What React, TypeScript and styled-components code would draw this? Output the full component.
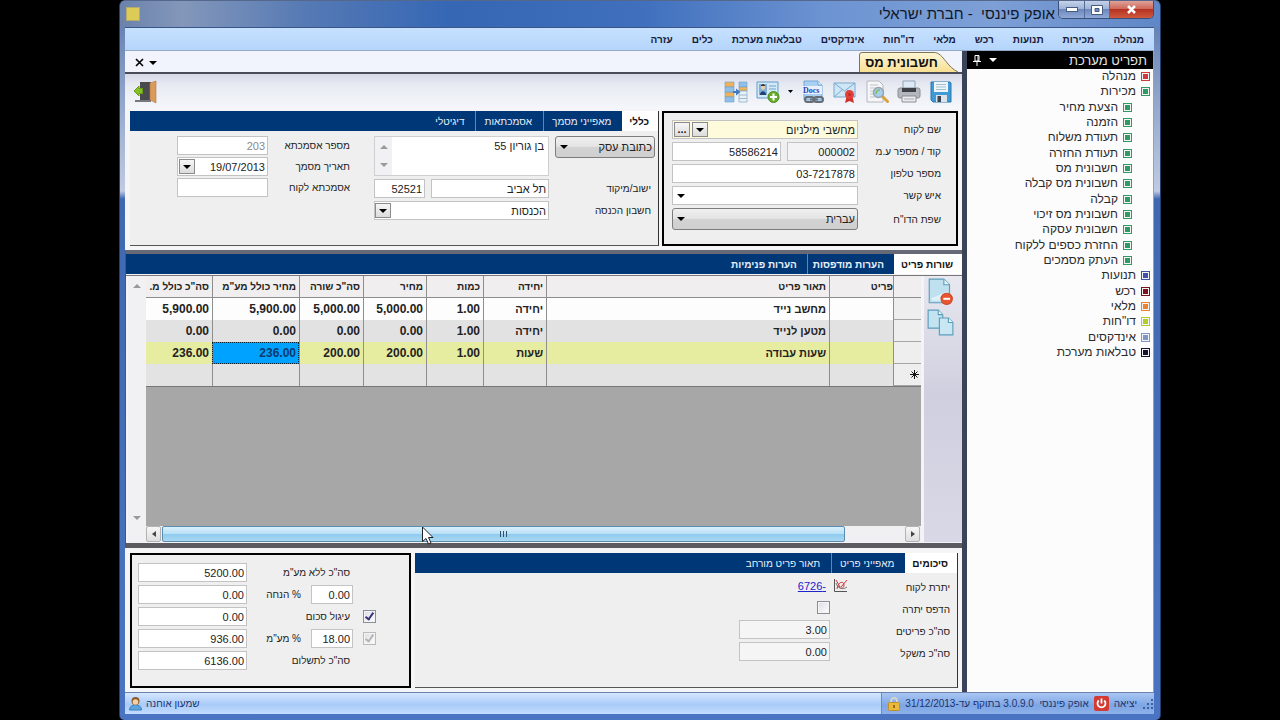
import React from "react";
import styled, { createGlobalStyle, css } from "styled-components";

const GlobalStyle = createGlobalStyle`
  *, *::before, *::after { box-sizing: border-box; }
  body { margin: 0; background: #000; }
  body, button, input, select, textarea {
    font-family: "Liberation Sans", Arial, sans-serif;
    font-size: 11px;
    color: #222;
  }
  button { cursor: default; padding: 0; }
  svg { flex: none; }
`;

/* ---------- window frame ---------- */

const Desktop = styled.div`
  direction: rtl;
  min-height: 100vh;
  padding: 0 119px;
  background: #000;
  display: flex;
`;

const Window = styled.div`
  flex: 1;
  min-width: 0;
  display: flex;
  flex-direction: column;
  padding: 0 6px 6px 5px;
  border: 1px solid #24406f;
  border-top-color: #55678a;
  border-bottom: 0;
  border-radius: 6px 6px 5px 5px;
  background: linear-gradient(to bottom, #5676ae 0, #8ea2c8 90px, #c0cbe2 190px, #4068b2 198px, #4a74c2 100%);
`;

const TitleBar = styled.header`
  height: 26px;
  margin: 0 -6px 0 -5px;
  padding: 0 6px;
  display: flex;
  align-items: flex-start;
  border-radius: 5px 5px 0 0;
  background: linear-gradient(to left, #5f86c6 0, #7d9fd6 16%, #6d94d2 32%, #3f6fbd 50%, #3567b5 68%, #5579b4 82%, #8397ba 94%, #6b82ac 100%);
`;

const WindowButtons = styled.div`
  display: flex;
  direction: ltr;
  height: 18px;
  border: 1px solid #3c4f78;
  border-top: 0;
  border-radius: 0 0 5px 5px;
  overflow: hidden;
`;

const WindowButton = styled.button<{ $close?: boolean }>`
  width: ${(p) => (p.$close ? 44 : 25)}px;
  border: 0;
  border-left: 1px solid #566b95;
  background: ${(p) =>
    p.$close
      ? "linear-gradient(#e0a199, #cf6a5c 45%, #b53323 50%, #cf5a3c)"
      : "linear-gradient(#c5d3ea, #9fb3d8 45%, #6d88bd 50%, #8fa9d8)"};
  display: flex;
  align-items: center;
  justify-content: center;
  &:first-child { border-left: 0; }
`;

const WindowTitle = styled.h1`
  flex: 1;
  margin: 0;
  padding-right: 3px;
  font-size: 15px;
  font-weight: 400;
  line-height: 25px;
  white-space: pre;
  color: #101828;
`;

const AppIcon = styled.span`
  width: 14px;
  height: 14px;
  margin-top: 6px;
  border: 1px solid #b5ac6c;
  background: #dccb57;
`;

const MenuBar = styled.nav`
  height: 24px;
  padding: 0 10px;
  display: flex;
  align-items: center;
  gap: 19px;
  border-top: 1px solid #3a5588;
  border-bottom: 1px solid #93a9c8;
  background: linear-gradient(#c6e1ff, #b6d5fb);
`;

const MenuItem = styled.button`
  border: 0;
  background: none;
  font-size: 10px;
  font-weight: 700;
  color: #16203c;
  white-space: nowrap;
`;

const Body = styled.div`
  flex: 1;
  display: flex;
  min-height: 0;
`;

/* ---------- system menu ---------- */

const Sidebar = styled.aside`
  width: 192px;
  flex: none;
  border-right: 1px solid #8fa0c0;
  border-left: 5px solid #3b4359;
  background: #fcfcfd;
`;

const SidebarHead = styled.div`
  height: 18px;
  padding: 0 6px;
  display: flex;
  align-items: center;
  gap: 8px;
  background: #000;
`;

const SidebarTitle = styled.h2`
  flex: 1;
  margin: 0;
  font-size: 13px;
  font-weight: 400;
  color: #e6e6e6;
`;

const PlainButton = styled.button`
  border: 0;
  background: none;
  display: flex;
  align-items: center;
  justify-content: center;
`;

const Tree = styled.ul`
  list-style: none;
  margin: 0;
  padding: 0 3px 0 0;
  height: 291px;
  display: grid;
  grid-auto-rows: 1fr;
`;

const TreeItem = styled.li<{ $child?: boolean }>`
  display: flex;
  align-items: center;
  gap: 5px;
  padding-right: ${(p) => (p.$child ? 18 : 0)}px;
  font-size: 12px;
  line-height: 15px;
  color: #2b2b2b;
  white-space: nowrap;
`;

const Bullet = styled.span<{ $color: string }>`
  width: 9px;
  height: 9px;
  border: 1px solid ${(p) => p.$color};
  background: ${(p) => p.$color};
  box-shadow: inset 0 0 0 1px #f4f4f4;
`;

/* ---------- document area ---------- */

const Main = styled.main`
  flex: 1;
  min-width: 0;
  display: flex;
  flex-direction: column;
  background: #f4f5fa;
`;

const DocTabs = styled.div`
  height: 23px;
  padding: 2px 4px 0 10px;
  display: flex;
  align-items: flex-end;
  justify-content: space-between;
  border-bottom: 2px solid #4a4d57;
  background: #f1f4fc;
`;

const DocTab = styled.button`
  position: relative;
  width: 99px;
  height: 20px;
  border: 0;
  background: none;
  font-size: 13px;
  font-weight: 700;
  color: #111;
  padding-right: 14px;
  svg { position: absolute; inset: 0; }
  span { position: relative; }
`;

const DocTabTools = styled.div`
  height: 100%;
  display: flex;
  align-items: center;
  gap: 5px;
`;

const Toolbar = styled.div`
  height: 35px;
  padding: 0 9px;
  display: flex;
  align-items: center;
  gap: 8px;
  background: linear-gradient(#d6d9e6, #e9ebf4 35%, #f6f7fb);
`;

const Spacer = styled.span`
  flex: 1;
`;

const PanelRow = styled.div`
  padding: 2px 4px 4px 5px;
  display: flex;
  gap: 3px;
  height: 141px;
  background: #f5f5f7;
`;

const OutlinedPanel = styled.section<{ $width: number }>`
  width: ${(p) => p.$width}px;
  flex: none;
  border: 2px solid #000;
  background: #efefef;
`;

const TabbedPanel = styled.section`
  flex: 1;
  min-width: 0;
  border-right: 1px solid #333;
  border-bottom: 1px solid #555;
  background: #efefef;
`;

const TabBar = styled.div`
  height: 20px;
  display: flex;
  background: #003776;
`;

const Tab = styled.button<{ $active?: boolean; $bold?: boolean; $last?: boolean }>`
  border: 0;
  padding: ${(p) => (p.$bold ? "0 10px 0 5px" : "0 11px 0 8px")};
  white-space: nowrap;
  background: none;
  color: #e8f0fb;
  font-size: 10px;
  font-weight: ${(p) => (p.$bold ? 700 : 400)};
  ${(p) =>
    !p.$active && !p.$last &&
    css`border-left: 1px solid #5f86b8;`}
  ${(p) =>
    p.$active &&
    css`
      padding: 0 9px 0 7px;
      background: #fff;
      color: #111;
      font-weight: 700;
    `}
`;

const fieldBox = css`
  height: 19px;
  min-width: 0;
  width: 100%;
  border: 1px solid #c3c3c3;
  border-radius: 0;
  background: #fff;
  outline: 0;
  padding: 0 2px;
`;

const Field = styled.input<{ $muted?: boolean; $tint?: string }>`
  ${fieldBox}
  direction: ${(p) => (p.dir ? p.dir : "rtl")};
  text-align: right;
  color: ${(p) => (p.$muted ? "#8a8a8a" : "#222")};
  background: ${(p) => p.$tint || "#fff"};
`;

const FieldGroup = styled.div<{ $tint?: string }>`
  ${fieldBox}
  display: flex;
  align-items: center;
  gap: 2px;
  padding: 0 0 0 1px;
  background: ${(p) => p.$tint || "#fff"};
  input { border: 0; height: 17px; background: none; flex: 1; }
`;

const SmallButton = styled.button`
  flex: none;
  width: 16px;
  height: 15px;
  border: 1px solid #8b8b8b;
  background: linear-gradient(#f6f6f6, #dcdcdc);
  display: flex;
  align-items: center;
  justify-content: center;
  font-weight: 700;
  line-height: 9px;
`;

const SelectBox = styled.div<{ $look: "flat" | "button" | "boxed" }>`
  position: relative;
  align-self: start;
  select {
    ${fieldBox}
    appearance: none;
    display: block;
    padding: 0 2px 0 18px;
    ${(p) =>
      p.$look === "button" &&
      css`
        height: 22px;
        border: 1px solid #7d7d7d;
        border-radius: 3px;
        background: linear-gradient(#f1f1f1, #e3e3e3 48%, #d3d3d3 52%, #cfcfcf);
      `}
  }
`;

const SelectArrow = styled.span<{ $boxed?: boolean }>`
  position: absolute;
  inset: 2px auto 2px 1px;
  width: 16px;
  display: flex;
  align-items: center;
  justify-content: center;
  pointer-events: none;
  ${(p) =>
    p.$boxed &&
    css`
      border: 1px solid #8b8b8b;
      background: linear-gradient(#f6f6f6, #dcdcdc);
    `}
`;

const Label = styled.label`
  white-space: nowrap;
  font-size: 10px;
  color: #222;
  align-self: center;
`;

const CustomerForm = styled.div`
  padding: 7px 15px 0 8px;
  display: grid;
  grid-template-columns: 1fr 186px;
  row-gap: 3px;
`;

const Pair = styled.div<{ $second: number }>`
  display: grid;
  grid-template-columns: 1fr ${(p) => p.$second}px;
  gap: 6px;
`;

const GeneralForm = styled.div`
  padding: 5px 3px 0;
  display: flex;
  gap: 24px;
  align-items: flex-start;
`;

const AddressForm = styled.div`
  display: grid;
  grid-template-columns: 100px 175px;
  column-gap: 6px;
  row-gap: 3px;
  label { padding-right: 4px; }
`;

const ReferenceForm = styled.div`
  display: grid;
  grid-template-columns: 62px 91px;
  column-gap: 20px;
  row-gap: 2px;
`;

const AddressBox = styled.div`
  height: 40px;
  border: 1px solid #cfcfcf;
  background: #fff;
  display: flex;
  textarea {
    flex: 1;
    min-width: 0;
    border: 0;
    outline: 0;
    resize: none;
    overflow: hidden;
    padding: 3px 4px 0;
    background: none;
  }
`;

const ScrollTrack = styled.div<{ $width: number; $bottom: number }>`
  width: ${(p) => p.$width}px;
  flex: none;
  padding: 7px 0 ${(p) => p.$bottom}px;
  display: flex;
  flex-direction: column;
  align-items: center;
  justify-content: space-between;
  background: #f1f1f3;
`;

/* ---------- item lines ---------- */

const ItemsSection = styled.section`
  flex: 1;
  display: flex;
  flex-direction: column;
  border-top: 4px solid #666a76;
  border-bottom: 5px solid #5c5c60;
  border-left: 1px solid #555;
  background: #f4f4f6;
`;

const ItemsBody = styled.div`
  flex: 1;
  display: flex;
  margin-top: 1px;
  padding: 0 0 1px 2px;
  border-top: 1px solid #777;
`;

const SideStrip = styled.div`
  width: 38px;
  flex: none;
  padding: 2px 5px 0 0;
  display: flex;
  flex-direction: column;
  align-items: center;
  gap: 4px;
  background: linear-gradient(#e8e8f0, #cfcfdf 45%, #d8d8e6);
`;

const GridColumn = styled.div`
  flex: 1;
  min-width: 0;
  margin-right: 3px;
  display: flex;
  flex-direction: column;
  background: #a7a7a7;
`;

const LinesTable = styled.table`
  width: 100%;
  table-layout: fixed;
  border-collapse: separate;
  border-spacing: 0;
  font-size: 12px;
  font-weight: 700;
  border-bottom: 1px solid #777;
`;

const HeadCell = styled.th`
  height: 22px;
  padding: 0 3px;
  overflow: hidden;
  white-space: nowrap;
  text-align: right;
  font-size: 10px;
  background: #f0eeef;
  border-bottom: 1px solid #8e8e8e;
  border-left: 1px solid #8e8e8e;
  &:nth-child(2) { padding: 0; }
  &:last-child { border-left: 0; }
`;

type RowTone = "white" | "gray" | "lime" | "new";
const tones: Record<RowTone, string> = { white: "#fdfdfd", gray: "#e2e2e3", lime: "#e6eca0", new: "#e3e3e3" };

const LineRow = styled.tr<{ $tone: RowTone }>`
  background: ${(p) => tones[p.$tone]};
`;

const Cell = styled.td<{ $selected?: boolean }>`
  height: 22px;
  padding: 0 3px;
  border-left: 1px solid #8e8e8e;
  white-space: nowrap;
  ${(p) =>
    p.$selected &&
    css`
      background: #00a2ff;
      outline: 1px dotted #123;
      outline-offset: -1px;
      color: #0b3a6e;
    `}
  &:last-child { border-left: 0; }
`;

const TextCell = styled(Cell)`
  font-size: 11px;
`;

const RowHead = styled.th`
  height: 22px;
  padding: 0 2px;
  text-align: right;
  background: #efeeef;
  border-left: 1px solid #8e8e8e;
  border-bottom: 1px solid #a5a5a5;
  svg { display: block; }
`;

const HScroll = styled.div`
  position: relative;
  direction: ltr;
  height: 16px;
  margin-top: auto;
  padding-right: 1px;
  display: flex;
  gap: 1px;
  background: #f0f0f2;
`;

const ScrollButton = styled.button`
  width: 15px;
  border: 1px solid #b3b3b3;
  border-radius: 2px;
  background: linear-gradient(#f7f7f7, #dedede);
  display: flex;
  align-items: center;
  justify-content: center;
`;

const ScrollRail = styled.div`
  flex: 1;
  display: flex;
`;

const Thumb = styled.div`
  width: 92%;
  border: 1px solid #5a8db0;
  border-radius: 2px;
  background: linear-gradient(#d9f0fc, #b9e0f6 48%, #8fcbee 52%, #a9d8f2);
  display: flex;
  align-items: center;
  justify-content: center;
  gap: 2px;
  i { width: 1px; height: 6px; background: #33506a; }
`;

const Pointer = styled.svg`
  position: absolute;
  left: 276px;
  top: 0;
`;

/* ---------- totals ---------- */

const BottomRow = styled.div`
  padding: 5px 4px 4px 5px;
  display: flex;
  gap: 4px;
  height: 144px;
  background: #f5f5f7;
`;

const SummaryForm = styled.div`
  padding: 3px 7px 0;
  display: grid;
  grid-template-columns: 120px 91px;
  grid-auto-rows: 19px;
  row-gap: 3px;
`;

const SummaryLabel = styled(Label)`
  padding-top: 4px;
`;

const BalanceCell = styled.div`
  display: flex;
  align-items: center;
  gap: 7px;
  margin-right: -18px;
  a { font-size: 11px; color: #2222cc; }
`;

const Check = styled.input`
  appearance: none;
  width: 13px;
  height: 13px;
  margin: 0;
  align-self: center;
  border: 1px solid #8d8d9a;
  background: linear-gradient(135deg, #dcdce4, #fff);
  box-shadow: inset 0 0 0 1px #f4f4f4;
  display: grid;
  place-items: center;
  &:checked::before {
    content: "";
    width: 5px;
    height: 9px;
    margin-bottom: 2px;
    border: solid #35357c;
    border-width: 0 2px 2px 0;
    transform: rotate(35deg);
  }
  &:disabled { border-color: #bbb; }
  &:disabled::before { border-color: #b5b5b5; }
`;

const TotalsForm = styled.div`
  padding: 8px 33px 0 6px;
  display: grid;
  grid-template-columns: 13px 42px 44px 1fr;
  grid-auto-rows: 19px;
  column-gap: 10px;
  row-gap: 3px;
`;

const WideLabel = styled(Label)`
  grid-column: 2 / span 2;
  padding-right: 3px;
`;

/* ---------- status bar ---------- */

const StatusBar = styled.footer`
  height: 22px;
  display: flex;
  border-top: 1px solid #6b83ad;
  font-size: 10px;
  color: #1c3370;
`;

const StatusInfo = styled.div`
  width: 273px;
  flex: none;
  display: flex;
  align-items: center;
  gap: 5px;
  background: linear-gradient(#a9c6f3, #7ea6e4 60%, #8db1ea);
  border-left: 1px solid #6b8bc4;
  white-space: pre;
`;

const ExitButton = styled(PlainButton)`
  gap: 5px;
  font-size: 10px;
  color: #1c3370;
`;

const StatusUser = styled.div`
  flex: 1;
  display: flex;
  align-items: center;
  justify-content: flex-end;
  gap: 4px;
  padding-left: 4px;
  background: linear-gradient(#d6e7ff, #a9cbf8 55%, #c3dcff);
`;

/* ---------- drawings ---------- */

type ArrowProps = { color?: string; dir?: "down" | "up" | "left" | "right" };
const arrowPaths = { down: "M0 1h8L4 5z", up: "M0 5h8L4 1z", left: "M6 0v6L2 3z", right: "M2 0v6l4-3z" };
const Arrow = ({ color = "#000", dir = "down" }: ArrowProps) => (
  <svg width="8" height="6" viewBox="0 0 8 6" aria-hidden="true">
    <path d={arrowPaths[dir]} fill={color} />
  </svg>
);

const Icon = ({ children, size = 24 }: { children: React.ReactNode; size?: number }) => (
  <svg width={size} height={size} viewBox="0 0 24 24" aria-hidden="true">
    {children}
  </svg>
);

const SaveIcon = () => (
  <Icon>
    <path d="M2 2h19l1 1v19H4l-2-2z" fill="#3f9bd6" stroke="#2a77b0" />
    <path d="M5 2h14v10H5z" fill="#eef6fb" />
    <path d="M7 4.500h10M7 7h10M7 9.500h10" stroke="#a3bfce" />
    <path d="M7 15h11v7H7z" fill="#dde3e8" />
    <path d="M8.500 16h3.500v6H8.500z" fill="#3a4653" />
  </Icon>
);
const PrintIcon = () => (
  <Icon>
    <path d="M6 1h12v9H6z" fill="#dbeaf6" stroke="#8fa4b5" />
    <rect x="1" y="8" width="22" height="10" rx="2" fill="#b4b7bc" stroke="#8a8e95" />
    <path d="M5 8h14v4H5z" fill="#3d4249" />
    <path d="M5 16h14v6H5z" fill="#e8eaec" stroke="#8b8f95" />
    <path d="M7 19h10" stroke="#a9adb3" />
  </Icon>
);
const PreviewIcon = () => (
  <Icon>
    <path d="M2 1h12l4 4v17H2z" fill="#f5f6f7" stroke="#b4b8bd" />
    <path d="M5 5h8M5 8h10M5 11h4M5 14h3M5 17h5" stroke="#bfc4c9" />
    <path d="M17.500 16.500l5 5" stroke="#d9a241" strokeWidth="3" strokeLinecap="round" />
    <circle cx="13.500" cy="12.500" r="5" fill="#a6cfee" stroke="#98a3ad" strokeWidth="1.500" />
    <path d="M11 14c0-3 2-4 4-4" stroke="#7fc05b" strokeWidth="1.500" fill="none" />
  </Icon>
);
const MailIcon = () => (
  <Icon>
    <path d="M1 3h21v14H1z" fill="#cfe6f7" stroke="#78a9cc" />
    <path d="M1 3l10.500 8L22 3M1 17l8-7M22 17l-8-7" fill="none" stroke="#78a9cc" />
    <path d="M14 15l-2 8 4.500-2 4.500 2-2-8z" fill="#d0302a" />
    <circle cx="16.500" cy="14.500" r="4.500" fill="#e2403a" />
    <circle cx="16.500" cy="14.500" r="1.500" fill="#c42b25" />
  </Icon>
);
const DocsIcon = () => (
  <Icon>
    <path d="M3 1h14l4 4v15H3z" fill="#a9cff2" stroke="#74a7d3" />
    <path d="M17 1v4h4" fill="#e6f2fb" stroke="#74a7d3" />
    <rect x="1" y="6" width="20" height="8" fill="#e8f1fb" />
    <text x="2" y="13" fontFamily="Liberation Serif, serif" fontWeight="700" fontSize="8" fill="#1c42c0" direction="ltr" textAnchor="start">Docs</text>
    <g fill="none" stroke="#666c74" strokeWidth="2">
      <rect x="4" y="17" width="9" height="5" rx="2.500" />
      <rect x="13" y="17" width="9" height="5" rx="2.500" />
      <path d="M9 19.500h8" />
    </g>
  </Icon>
);
const CardIcon = () => (
  <Icon>
    <path d="M1 2h21v16H1z" fill="#d3e9f8" stroke="#5f9dc9" />
    <path d="M3 4h8v11H3z" fill="#7fb0da" />
    <circle cx="7" cy="7.500" r="2.200" fill="#f1cda4" />
    <path d="M4.800 6c0-2.500 4.400-2.500 4.400 0z" fill="#333" />
    <path d="M4 15c0-5 6-5 6 0z" fill="#25406e" />
    <path d="M13 6h7M13 9h7" stroke="#6fa4cb" />
    <circle cx="17.500" cy="17" r="5.500" fill="#69ad2c" stroke="#4a8a18" />
    <path d="M17.500 13.500v7M14 17h7" stroke="#fff" strokeWidth="2" />
  </Icon>
);
const MergeIcon = () => (
  <Icon>
    <g stroke="#6f9fc4" strokeWidth=".6">
      <path d="M1 2h9v5H1zM1 12h9v5H1z" fill="#efb25b" />
      <path d="M1 7h9v5H1zM1 17h9v5H1z" fill="#8fc0ea" />
      <path d="M15 2h8v5h-8z" fill="#8fc0ea" />
      <path d="M15 7h8v4h-8z" fill="#efb25b" />
      <path d="M15 11h8v11h-8z" fill="#e9f0f6" />
    </g>
    <path d="M15 15h8M15 18.500h8" stroke="#9cb9d0" />
    <path d="M9 12h4" stroke="#3f7ac0" strokeWidth="2" />
    <path d="M12 8.500l4.500 3.500-4.500 3.500z" fill="#3f7ac0" />
  </Icon>
);
const DoorIcon = () => (
  <Icon>
    <path d="M6 2h11v19H6z" fill="#4a4b4f" />
    <path d="M16 3l6-2v22l-6-3z" fill="#d99a5b" stroke="#b77b40" strokeWidth=".6" />
    <path d="M1 21h16" stroke="#77787c" strokeWidth="2" />
    <path d="M0 11l5-5v2.500h3.500v5H5V16z" fill="#86bf27" stroke="#6a9e17" />
  </Icon>
);
const DocDeleteIcon = () => (
  <Icon size={27}>
    <path d="M2 1h13l5 5v16H2z" fill="#bfe0ef" stroke="#5a9dbb" />
    <path d="M15 1v5h5" fill="#eef8fc" stroke="#5a9dbb" />
    <path d="M4 18l14-6v8H4z" fill="#dff1f8" />
    <circle cx="17.500" cy="18.500" r="5" fill="#e8572f" stroke="#cf4522" />
    <path d="M14.500 18.500h6" stroke="#fff" strokeWidth="1.800" />
  </Icon>
);
const DocCopyIcon = () => (
  <Icon size={27}>
    <path d="M1 1h9l4 4v12H1z" fill="#c3e3f1" stroke="#5a9dbb" />
    <path d="M10 1v4h4" fill="#eef8fc" stroke="#5a9dbb" />
    <path d="M11 8h8l4 4v11H11z" fill="#c9e7f3" stroke="#5a9dbb" />
    <path d="M19 8v4h4" fill="#eef8fc" stroke="#5a9dbb" />
  </Icon>
);
const ChartIcon = () => (
  <svg width="15" height="15" viewBox="0 0 15 15" aria-hidden="true">
    <path d="M1.500 1v12.500H14" fill="none" stroke="#555" />
    <path d="M3 2l4 7M4 11c1-8 7-8 7-4s-4 4-6 1M8 9l6-7" fill="none" stroke="#c33" />
    <path d="M3 5c2 6 7 7 11 4" fill="none" stroke="#777" />
  </svg>
);
const NewRowIcon = () => (
  <svg width="9" height="9" viewBox="0 0 9 9" aria-hidden="true">
    <path d="M4.500 0v9M0 4.500h9M1.500 1.500l6 6M7.500 1.500l-6 6" stroke="#111" />
  </svg>
);
const PinIcon = () => (
  <svg width="8" height="11" viewBox="0 0 8 11" aria-hidden="true">
    <path d="M2 .5h4V6H2zM5 1v5M0 6.500h8M4 7v4" fill="none" stroke="#fff" />
  </svg>
);
const PowerIcon = () => (
  <svg width="15" height="15" viewBox="0 0 15 15" aria-hidden="true">
    <rect width="15" height="15" rx="2" fill="#d23a32" />
    <path d="M4.800 4.500a4 4 0 1 0 5.400 0M7.500 2.500v5" fill="none" stroke="#fff" strokeWidth="1.800" />
  </svg>
);
const LockIcon = () => (
  <svg width="12" height="14" viewBox="0 0 12 14" aria-hidden="true">
    <path d="M3 6V4a3 3 0 0 1 6 0v2" fill="none" stroke="#d6d6cb" strokeWidth="1.800" />
    <rect x=".5" y="5.500" width="11" height="8" rx="1" fill="#eab93e" stroke="#c18f22" />
    <path d="M6 8v3" stroke="#7a5a10" strokeWidth="1.500" />
  </svg>
);
const UserIcon = () => (
  <svg width="13" height="15" viewBox="0 0 13 15" aria-hidden="true">
    <path d="M.5 14c0-7 12-7 12 0z" fill="#5fa3dc" stroke="#3f80bd" />
    <circle cx="6.500" cy="5" r="4" fill="#8c5a2b" />
    <circle cx="6.500" cy="6" r="2.800" fill="#f3d0a6" />
  </svg>
);
const GripIcon = () => (
  <svg width="12" height="12" viewBox="0 0 12 12" aria-hidden="true">
    <path d="M9 1h2v2H9zM9 5h2v2H9zM5 5h2v2H5zM9 9h2v2H9zM5 9h2v2H5zM1 9h2v2H1z" fill="#3f5f9f" />
  </svg>
);

/* ---------- data ---------- */

const menu = ["מנהלה", "מכירות", "תנועות", "רכש", "מלאי", 'דו"חות', "אינדקסים", "טבלאות מערכת", "כלים", "עזרה"];

const green = "#2f9a63";
const tree: { text: string; color: string; child?: boolean }[] = [
  { text: "מנהלה", color: "#cf3a3a" },
  { text: "מכירות", color: green },
  ...["הצעת מחיר", "הזמנה", "תעודת משלוח", "תעודת החזרה", "חשבונית מס", "חשבונית מס קבלה", "קבלה", "חשבונית מס זיכוי", "חשבונית עסקה", "החזרת כספים ללקוח", "העתק מסמכים"].map(
    (text) => ({ text, color: green, child: true })
  ),
  { text: "תנועות", color: "#4450a8" },
  { text: "רכש", color: "#7c1420" },
  { text: "מלאי", color: "#ea8433" },
  { text: 'דו"חות', color: "#b4cc2e" },
  { text: "אינדקסים", color: "#7f97c4" },
  { text: "טבלאות מערכת", color: "#14142c" },
];

const columns: { text: string; width?: number }[] = [
  { text: "", width: 28 },
  { text: "פריט", width: 64 },
  { text: "תאור פריט" },
  { text: "יחידה", width: 63 },
  { text: "כמות", width: 57 },
  { text: "מחיר", width: 63 },
  { text: 'סה"כ שורה', width: 64 },
  { text: 'מחיר כולל מע"מ', width: 87 },
  { text: 'סה"כ כולל מ.', width: 66 },
];

const lines: { tone: RowTone; name: string; unit: string; nums: string[]; selected?: number }[] = [
  { tone: "white", name: "מחשב נייד", unit: "יחידה", nums: ["1.00", "5,000.00", "5,000.00", "5,900.00", "5,900.00"] },
  { tone: "gray", name: "מטען לנייד", unit: "יחידה", nums: ["1.00", "0.00", "0.00", "0.00", "0.00"] },
  { tone: "lime", name: "שעות עבודה", unit: "שעות", nums: ["1.00", "200.00", "200.00", "236.00", "236.00"], selected: 3 },
];

type DropProps = { id: string; value: string; look: "flat" | "button" | "boxed"; label?: string };
const Drop = ({ id, value, look, label }: DropProps) => (
  <SelectBox $look={look}>
    <select id={id} defaultValue={value} aria-label={label}>
      <option value={value}>{value}</option>
    </select>
    <SelectArrow $boxed={look === "boxed"}>
      <Arrow />
    </SelectArrow>
  </SelectBox>
);

const CustomerPanel = () => (
  <OutlinedPanel $width={296}>
    <CustomerForm>
      <Label htmlFor="customer">שם לקוח</Label>
      <FieldGroup $tint="#fdfbdc">
        <Field id="customer" defaultValue="מחשבי מילניום" />
        <SmallButton aria-label="פתח רשימה"><Arrow /></SmallButton>
        <SmallButton>...</SmallButton>
      </FieldGroup>
      <Label htmlFor="code">קוד / מספר ע.מ</Label>
      <Pair $second={109}>
        <Field id="code" dir="ltr" defaultValue="000002" $tint="#f3f3f6" />
        <Field aria-label="מספר ע.מ" dir="ltr" defaultValue="58586214" />
      </Pair>
      <Label htmlFor="phone">מספר טלפון</Label>
      <Field id="phone" dir="ltr" defaultValue="03-7217878" />
      <Label htmlFor="contact">איש קשר</Label>
      <Drop id="contact" value="" look="flat" />
      <Label htmlFor="language">שפת הדו"ח</Label>
      <Drop id="language" value="עברית" look="button" />
    </CustomerForm>
  </OutlinedPanel>
);

const GeneralPanel = () => (
  <TabbedPanel>
    <TabBar>
      <Tab $active>כללי</Tab>
      <Tab>מאפייני מסמך</Tab>
      <Tab>אסמכתאות</Tab>
      <Tab $last>דיגיטלי</Tab>
    </TabBar>
    <GeneralForm>
      <AddressForm>
        <Drop id="addressKind" value="כתובת עסק" look="button" label="סוג כתובת" />
        <AddressBox>
          <textarea aria-label="כתובת" defaultValue="בן גוריון 55" />
          <ScrollTrack $width={17} $bottom={7}>
            <Arrow dir="up" color="#999" />
            <Arrow color="#999" />
          </ScrollTrack>
        </AddressBox>
        <Label htmlFor="city">ישוב/מיקוד</Label>
        <Pair $second={51}>
          <Field id="city" defaultValue="תל אביב" />
          <Field aria-label="מיקוד" dir="ltr" defaultValue="52521" />
        </Pair>
        <Label htmlFor="income">חשבון הכנסה</Label>
        <Drop id="income" value="הכנסות" look="boxed" />
      </AddressForm>
      <ReferenceForm>
        <Label htmlFor="reference">מספר אסמכתא</Label>
        <Field id="reference" dir="ltr" defaultValue="203" $muted />
        <Label htmlFor="date">תאריך מסמך</Label>
        <FieldGroup>
          <Field id="date" dir="ltr" defaultValue="19/07/2013" />
          <SmallButton aria-label="בחר תאריך"><Arrow /></SmallButton>
        </FieldGroup>
        <Label htmlFor="customerRef">אסמכתא לקוח</Label>
        <Field id="customerRef" />
      </ReferenceForm>
    </GeneralForm>
  </TabbedPanel>
);

const ItemLines = () => (
  <ItemsSection>
    <TabBar>
      <Tab $active>שורות פריט</Tab>
      <Tab $bold>הערות מודפסות</Tab>
      <Tab $bold $last>הערות פנימיות</Tab>
    </TabBar>
    <ItemsBody>
      <SideStrip>
        <PlainButton aria-label="מחק שורה"><DocDeleteIcon /></PlainButton>
        <PlainButton aria-label="שכפל שורה"><DocCopyIcon /></PlainButton>
      </SideStrip>
      <GridColumn>
        <LinesTable>
          <colgroup>
            {columns.map((c, i) => <col key={i} width={c.width} />)}
          </colgroup>
          <thead>
            <tr>
              {columns.map((c, i) => <HeadCell key={i}>{c.text}</HeadCell>)}
            </tr>
          </thead>
          <tbody>
            {lines.map((l) => (
              <LineRow key={l.name} $tone={l.tone}>
                <RowHead />
                <Cell />
                <TextCell>{l.name}</TextCell>
                <TextCell>{l.unit}</TextCell>
                {l.nums.map((n, i) => <Cell key={i} $selected={l.selected === i}>{n}</Cell>)}
              </LineRow>
            ))}
            <LineRow $tone="new">
              <RowHead aria-label="שורה חדשה"><NewRowIcon /></RowHead>
              {columns.slice(1).map((_, i) => <Cell key={i} />)}
            </LineRow>
          </tbody>
        </LinesTable>
        <HScroll>
          <ScrollButton aria-label="גלול שמאלה"><Arrow dir="left" color="#444" /></ScrollButton>
          <ScrollRail><Thumb><i /><i /><i /></Thumb></ScrollRail>
          <ScrollButton aria-label="גלול ימינה"><Arrow dir="right" color="#444" /></ScrollButton>
          <Pointer width="12" height="19" viewBox="0 0 12 19" aria-hidden="true">
            <path d="M.5 1v14.500l3.500-3 2.500 5.500 2.500-1-2.500-5.500H11z" fill="#fff" stroke="#222" />
          </Pointer>
        </HScroll>
      </GridColumn>
      <ScrollTrack $width={18} $bottom={21}>
        <Arrow dir="up" color="#999" />
        <Arrow color="#999" />
      </ScrollTrack>
    </ItemsBody>
  </ItemsSection>
);

const SummaryPanel = () => (
  <TabbedPanel>
    <TabBar>
      <Tab $active>סיכומים</Tab>
      <Tab>מאפייני פריט</Tab>
      <Tab $last>תאור פריט מורחב</Tab>
    </TabBar>
    <SummaryForm>
      <SummaryLabel as="span">יתרת לקוח</SummaryLabel>
      <BalanceCell><ChartIcon /><a href="#balance">-6726</a></BalanceCell>
      <SummaryLabel htmlFor="printBalance">הדפס יתרה</SummaryLabel>
      <Check type="checkbox" id="printBalance" />
      <SummaryLabel htmlFor="itemCount">סה"כ פריטים</SummaryLabel>
      <Field id="itemCount" dir="ltr" defaultValue="3.00" $tint="#f5f5f5" />
      <SummaryLabel htmlFor="weight">סה"כ משקל</SummaryLabel>
      <Field id="weight" dir="ltr" defaultValue="0.00" $tint="#f5f5f5" />
    </SummaryForm>
  </TabbedPanel>
);

const TotalsPanel = () => (
  <OutlinedPanel $width={281}>
    <TotalsForm>
      <span />
      <WideLabel htmlFor="net">סה"כ ללא מע"מ</WideLabel>
      <Field id="net" dir="ltr" defaultValue="5200.00" />
      <span />
      <Field aria-label="אחוז הנחה" dir="ltr" defaultValue="0.00" />
      <Label htmlFor="discount">% הנחה</Label>
      <Field id="discount" dir="ltr" defaultValue="0.00" />
      <Check type="checkbox" aria-label="עיגול סכום" defaultChecked />
      <WideLabel htmlFor="rounding">עיגול סכום</WideLabel>
      <Field id="rounding" dir="ltr" defaultValue="0.00" />
      <Check type="checkbox" aria-label='חייב במע"מ' defaultChecked disabled />
      <Field aria-label='אחוז מע"מ' dir="ltr" defaultValue="18.00" />
      <Label htmlFor="vat">% מע"מ</Label>
      <Field id="vat" dir="ltr" defaultValue="936.00" />
      <span />
      <WideLabel htmlFor="total">סה"כ לתשלום</WideLabel>
      <Field id="total" dir="ltr" defaultValue="6136.00" />
    </TotalsForm>
  </OutlinedPanel>
);

export default function App() {
  return (
    <>
      <GlobalStyle />
      <Desktop lang="he">
        <Window>
          <TitleBar>
            <WindowButtons>
              <WindowButton aria-label="מזער">
                <svg width="12" height="5"><rect x=".5" y=".5" width="11" height="4" fill="#fff" stroke="#4a5b80" /></svg>
              </WindowButton>
              <WindowButton aria-label="הגדל">
                <svg width="12" height="10"><path d="M.5.5h11v9H.5zM4 3.500h4v3H4z" fill="#fff" fillRule="evenodd" stroke="#4a5b80" /></svg>
              </WindowButton>
              <WindowButton $close aria-label="סגור">
                <svg width="11" height="9"><path d="M2 1l7 7M9 1L2 8" stroke="#fff" strokeWidth="2.500" /></svg>
              </WindowButton>
            </WindowButtons>
            <WindowTitle>{"אופק פיננסי  - חברת ישראלי"}</WindowTitle>
            <AppIcon />
          </TitleBar>
          <MenuBar>
            {menu.map((m) => <MenuItem key={m}>{m}</MenuItem>)}
          </MenuBar>
          <Body>
            <Sidebar>
              <SidebarHead>
                <SidebarTitle>תפריט מערכת</SidebarTitle>
                <PlainButton aria-label="אפשרויות"><Arrow color="#fff" /></PlainButton>
                <PlainButton aria-label="נעץ"><PinIcon /></PlainButton>
              </SidebarHead>
              <Tree>
                {tree.map((t) => (
                  <TreeItem key={t.text} $child={t.child}>
                    <Bullet $color={t.color} />
                    {t.text}
                  </TreeItem>
                ))}
              </Tree>
            </Sidebar>
            <Main>
              <DocTabs>
                <DocTab>
                  <svg width="99" height="20" viewBox="0 0 99 20" aria-hidden="true">
                    <defs>
                      <linearGradient id="tabFill" x1="0" y1="0" x2="0" y2="1">
                        <stop offset="0" stopColor="#fdf6d6" />
                        <stop offset="1" stopColor="#f8df94" />
                      </linearGradient>
                    </defs>
                    <path d="M.5 20V3Q.5.5 3 .5h72c5 0 8 4 12 9s7 8 12 10.500" fill="url(#tabFill)" stroke="#7d7455" />
                  </svg>
                  <span>חשבונית מס</span>
                </DocTab>
                <DocTabTools>
                  <PlainButton aria-label="רשימת מסמכים"><Arrow /></PlainButton>
                  <PlainButton aria-label="סגור מסמך">
                    <svg width="9" height="9"><path d="M1 1l7 7M8 1L1 8" stroke="#000" strokeWidth="1.600" /></svg>
                  </PlainButton>
                </DocTabTools>
              </DocTabs>
              <Toolbar>
                <PlainButton aria-label="שמור"><SaveIcon /></PlainButton>
                <PlainButton aria-label="הדפס"><PrintIcon /></PlainButton>
                <PlainButton aria-label="תצוגה מקדימה"><PreviewIcon /></PlainButton>
                <PlainButton aria-label="שלח בדואר"><MailIcon /></PlainButton>
                <PlainButton aria-label="מסמכים"><DocsIcon /></PlainButton>
                <PlainButton aria-label="עוד"><svg width="5" height="4"><path d="M0 0h5L2.500 3z" /></svg></PlainButton>
                <PlainButton aria-label="כרטיס לקוח"><CardIcon /></PlainButton>
                <PlainButton aria-label="מיזוג"><MergeIcon /></PlainButton>
                <Spacer />
                <PlainButton aria-label="יציאה מהמסמך"><DoorIcon /></PlainButton>
              </Toolbar>
              <PanelRow>
                <CustomerPanel />
                <GeneralPanel />
              </PanelRow>
              <ItemLines />
              <BottomRow>
                <SummaryPanel />
                <TotalsPanel />
              </BottomRow>
            </Main>
          </Body>
          <StatusBar>
            <StatusInfo>
              <GripIcon />
              <ExitButton>יציאה<PowerIcon /></ExitButton>
              <span>{"אופק פיננסי  3.0.9.0 בתוקף עד-31/12/2013"}</span>
              <LockIcon />
            </StatusInfo>
            <StatusUser>
              <span>שמעון אוחנה</span>
              <UserIcon />
            </StatusUser>
          </StatusBar>
        </Window>
      </Desktop>
    </>
  );
}
